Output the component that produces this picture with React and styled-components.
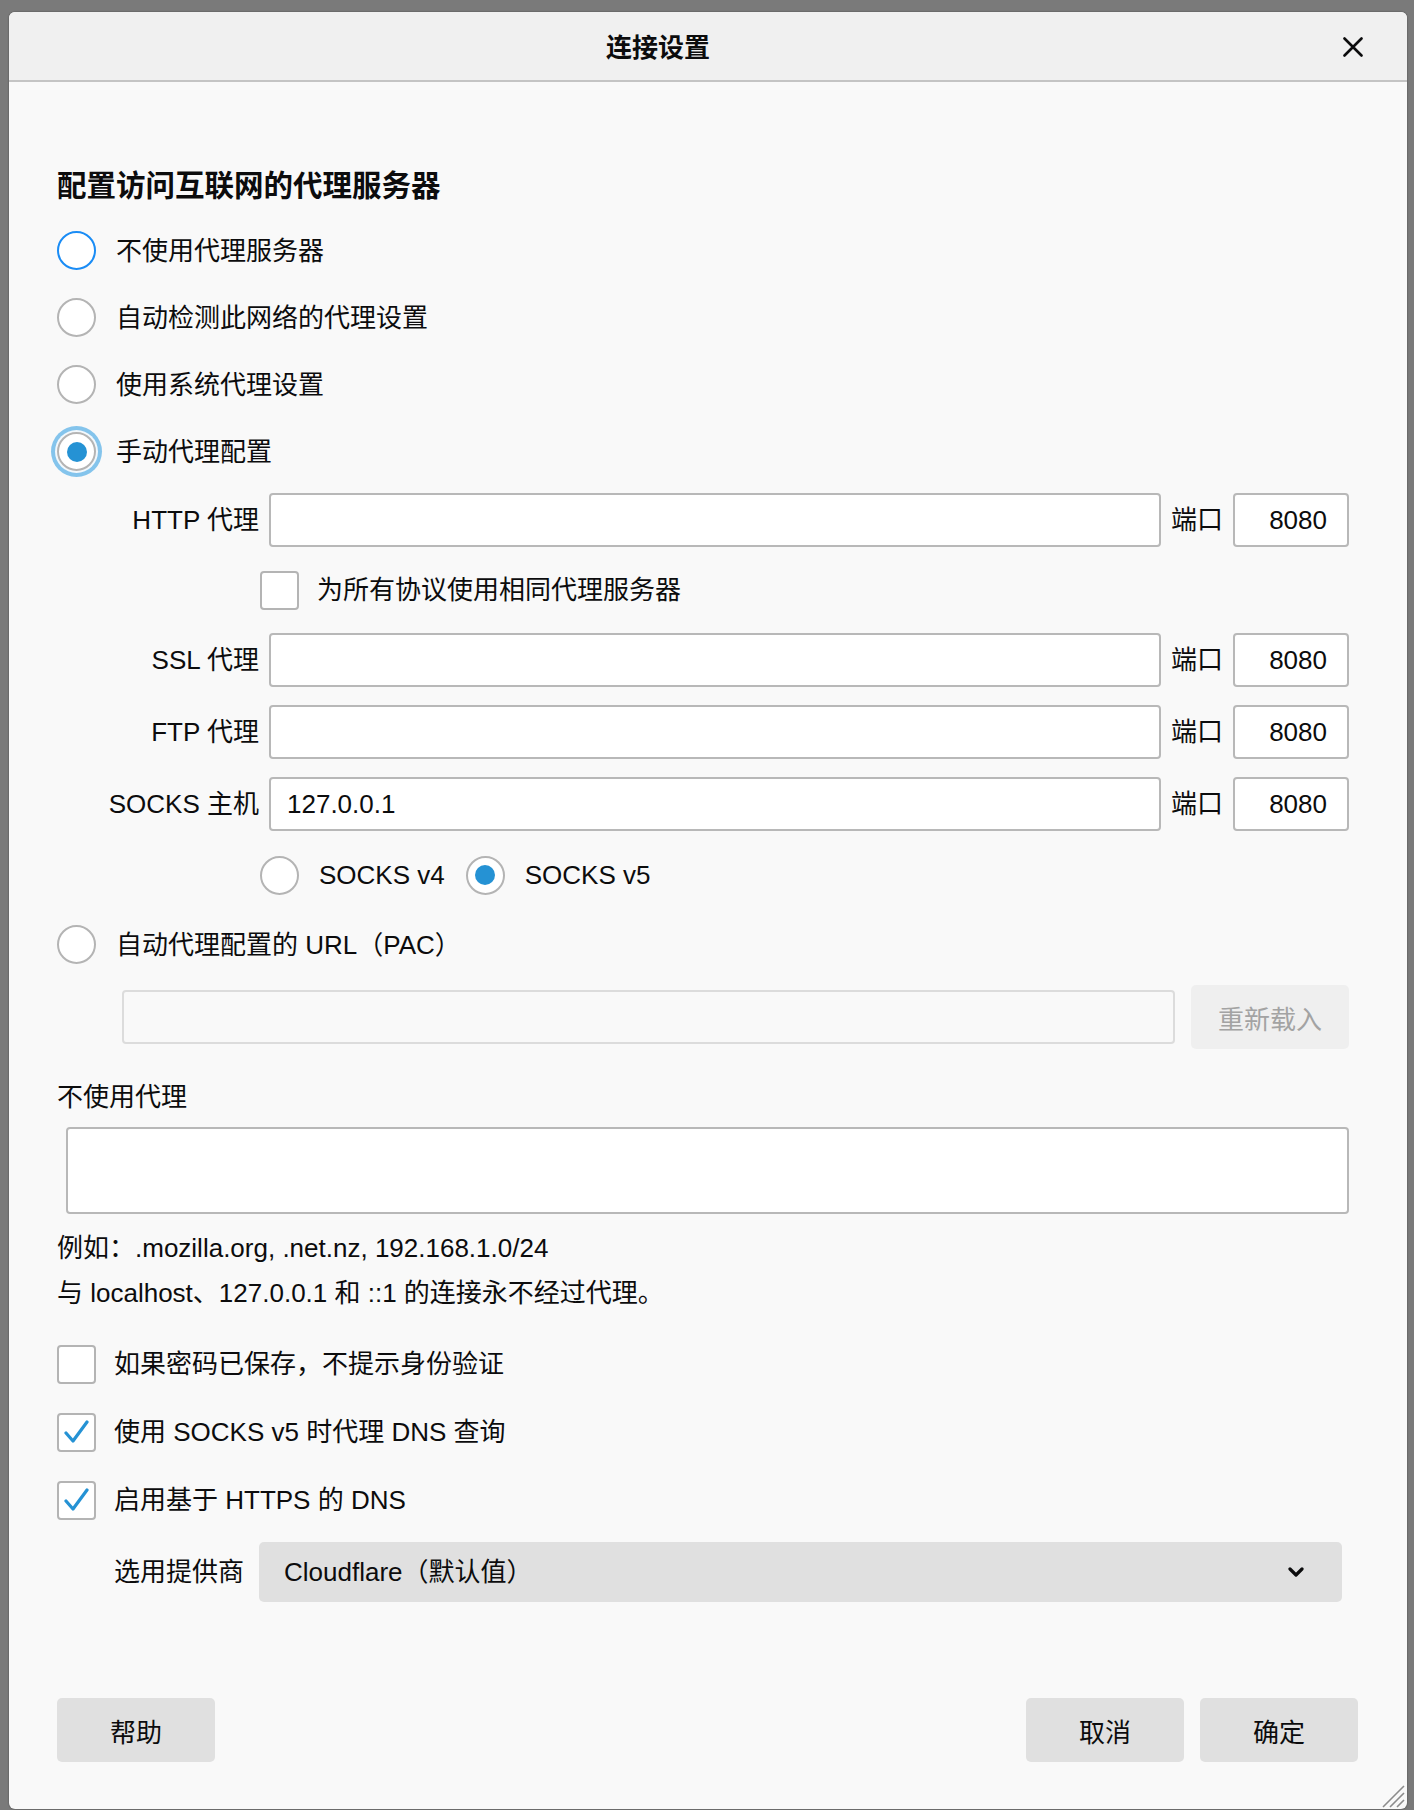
import React from "react"
import styled, { createGlobalStyle, css } from "styled-components"

const GlobalStyle = createGlobalStyle`
  html, body {
    margin: 0;
    padding: 0;
    background: #7a7a7a;
  }
  * {
    box-sizing: border-box;
  }
`

const font = `"Liberation Sans", "Noto Sans CJK SC", sans-serif`

const Backdrop = styled.div`
  height: 1810px;
  padding: 12px 7px 0 9px;
  overflow: hidden;
  font-family: ${font};
  color: #0c0c0d;
`

const Dialog = styled.div`
  position: relative;
  height: 1797px;
  background: #f9f9f9;
  border-radius: 6px;
  box-shadow: 0 0 2px rgba(0, 0, 0, 0.45);
  display: flex;
  flex-direction: column;
  overflow: hidden;
`

const TitleBar = styled.div`
  height: 70px;
  flex-shrink: 0;
  background: #f0f0f0;
  border-bottom: 2px solid #c4c4c4;
  display: flex;
  align-items: center;
  padding: 3px 100px 0 0;
  position: relative;
`

const Title = styled.div`
  flex: 1;
  text-align: center;
  font-size: 26px;
  font-weight: bold;
  line-height: 36px;
`

const CloseButton = styled.div`
  position: absolute;
  right: 44px;
  top: 25px;
  width: 20px;
  height: 20px;
  display: flex;
`

const Body = styled.div`
  flex: 1;
  display: flex;
  flex-direction: column;
  padding: 86px 58px 47px 48px;
  font-size: 26px;
`

const Heading = styled.div`
  font-size: 29.5px;
  font-weight: bold;
  line-height: 36px;
  margin-bottom: 13px;
`

const OptionRow = styled.label`
  display: flex;
  align-items: center;
  gap: ${p => p.$gap ?? 20}px;
  height: ${p => p.$height ?? 67}px;
  margin-top: ${p => p.$top ?? 0}px;
  line-height: 36px;
`

const Radio = styled.span`
  position: relative;
  flex-shrink: 0;
  width: 39px;
  height: 39px;
  border-radius: 50%;
  background: #fff;
  border: 2px solid ${p => (p.$accent ? "#1a8cf5" : "#b4b4b4")};
  ${p =>
    p.$focused &&
    css`
      box-shadow: 0 0 0 2px #f2f8fc, 0 0 0 6px #84c4ec;
    `}
  ${p =>
    p.$checked &&
    css`
      &::after {
        content: "";
        position: absolute;
        left: 50%;
        top: 50%;
        width: 20px;
        height: 20px;
        margin: -10px 0 0 -10px;
        border-radius: 50%;
        background: #2592d4;
      }
    `}
`

const Box = styled.span`
  flex-shrink: 0;
  width: 39px;
  height: 39px;
  border-radius: 4px;
  background: #fff;
  border: 2px solid #b4b4b4;
  display: flex;
  align-items: center;
  justify-content: center;
`

const ProxyGrid = styled.div`
  display: grid;
  grid-template-columns: 202px 1fr auto 116px;
  grid-template-rows: 54px 50px 54px 54px 54px 52px;
  column-gap: 10px;
  row-gap: 18px;
  align-items: center;
  margin-top: 8px;
  line-height: 36px;
`

const FieldLabel = styled.span`
  text-align: right;
  white-space: nowrap;
`

const TextField = styled.input`
  height: 54px;
  width: 100%;
  border: 2px solid #b8b8b8;
  border-radius: 4px;
  background: ${p => (p.disabled ? "#f9f9f9" : "#fff")};
  border-color: ${p => (p.disabled ? "#dcdcdc" : "#b8b8b8")};
  font: 26px ${font};
  color: #0c0c0d;
  padding: 0 ${p => (p.$align === "right" ? 20 : 16)}px 0 16px;
  text-align: ${p => p.$align || "left"};
  outline: none;
`

const SubRow = styled.div`
  grid-column: 2 / -1;
  margin-left: -9px;
  display: flex;
  align-items: center;
  gap: ${p => p.$gap ?? 18}px;
`

const RadioPair = styled.label`
  display: flex;
  align-items: center;
  gap: 20px;
`

const PacRow = styled.div`
  display: flex;
  align-items: center;
  gap: 16px;
  margin: 7px 0 0 65px;
  height: 64px;
`

const Button = styled.button`
  width: 158px;
  height: 64px;
  flex-shrink: 0;
  border: none;
  border-radius: 5px;
  background: ${p => (p.disabled ? "#efefef" : "#e0e0e0")};
  color: ${p => (p.disabled ? "#a3a3a3" : "#0c0c0d")};
  font: 26px ${font};
  padding: 0;
`

const SectionLabel = styled.div`
  line-height: 36px;
  margin-top: 30px;
`

const TextArea = styled.textarea`
  display: block;
  height: 87px;
  margin: 12px 0 0 9px;
  width: calc(100% - 9px);
  border: 2px solid #b8b8b8;
  border-radius: 4px;
  background: #fff;
  resize: none;
  font: 26px ${font};
  outline: none;
`

const Hint = styled.div`
  line-height: 36px;
  margin-top: ${p => p.$top}px;
`

const SelectRow = styled.div`
  display: flex;
  align-items: center;
  gap: 15px;
  margin: 8px 7px 0 57px;
  line-height: 36px;
`

const Select = styled.div`
  flex: 1;
  height: 60px;
  border-radius: 5px;
  background: #e0e0e0;
  display: flex;
  align-items: center;
  justify-content: space-between;
  padding: 0 38px 0 25px;
`

const Footer = styled.div`
  margin-top: auto;
  display: flex;
  align-items: center;
  gap: 16px;
  margin-right: -9px;
`

const Spacer = styled.div`
  flex: 1;
`

const Grip = styled.svg`
  position: absolute;
  right: 2px;
  bottom: 1px;
`

const Check = () => (
  <svg width="26" height="26" viewBox="0 0 26 26">
    <path d="M2 14 L9 22 L23 3" fill="none" stroke="#2592d4" strokeWidth="3.2" strokeLinecap="round" strokeLinejoin="round" />
  </svg>
)

const fields = [
  { label: "SSL 代理", value: "" },
  { label: "FTP 代理", value: "" },
  { label: "SOCKS 主机", value: "127.0.0.1" },
]

const PortCells = () => (
  <>
    <span>端口</span>
    <TextField defaultValue="8080" $align="right" />
  </>
)

const App = () => {
  return (
    <Backdrop>
      <GlobalStyle />
      <Dialog>
        <TitleBar>
          <Title>连接设置</Title>
          <CloseButton>
            <svg width="20" height="20" viewBox="0 0 20 20">
              <path d="M1.5 1.5 L18.5 18.5 M18.5 1.5 L1.5 18.5" stroke="#0c0c0d" strokeWidth="2.6" strokeLinecap="round" />
            </svg>
          </CloseButton>
        </TitleBar>
        <Body>
          <Heading>配置访问互联网的代理服务器</Heading>
          <OptionRow>
            <Radio $accent />
            不使用代理服务器
          </OptionRow>
          <OptionRow>
            <Radio />
            自动检测此网络的代理设置
          </OptionRow>
          <OptionRow>
            <Radio />
            使用系统代理设置
          </OptionRow>
          <OptionRow>
            <Radio $checked $focused />
            手动代理配置
          </OptionRow>

          <ProxyGrid>
            <FieldLabel>HTTP 代理</FieldLabel>
            <TextField />
            <PortCells />
            <SubRow>
              <Box />
              为所有协议使用相同代理服务器
            </SubRow>
            {fields.map(f => (
              <React.Fragment key={f.label}>
                <FieldLabel>{f.label}</FieldLabel>
                <TextField defaultValue={f.value} />
                <PortCells />
              </React.Fragment>
            ))}
            <SubRow $gap={21}>
              <RadioPair>
                <Radio />
                SOCKS v4
              </RadioPair>
              <RadioPair>
                <Radio $checked />
                SOCKS v5
              </RadioPair>
            </SubRow>
          </ProxyGrid>

          <OptionRow $top={10}>
            <Radio />
            自动代理配置的 URL（PAC）
          </OptionRow>
          <PacRow>
            <TextField disabled />
            <Button disabled>重新载入</Button>
          </PacRow>

          <SectionLabel>不使用代理</SectionLabel>
          <TextArea />
          <Hint $top={16}>例如：.mozilla.org, .net.nz, 192.168.1.0/24</Hint>
          <Hint $top={9}>与 localhost、127.0.0.1 和 ::1 的连接永不经过代理。</Hint>

          <OptionRow $height={68} $top={19} $gap={18}>
            <Box />
            如果密码已保存，不提示身份验证
          </OptionRow>
          <OptionRow $height={68} $gap={18}>
            <Box>
              <Check />
            </Box>
            使用 SOCKS v5 时代理 DNS 查询
          </OptionRow>
          <OptionRow $height={68} $gap={18}>
            <Box>
              <Check />
            </Box>
            启用基于 HTTPS 的 DNS
          </OptionRow>
          <SelectRow>
            <span>选用提供商</span>
            <Select>
              <span>Cloudflare（默认值）</span>
              <svg width="16" height="11" viewBox="0 0 16 11">
                <path d="M2 2 L8 8 L14 2" fill="none" stroke="#0c0c0d" strokeWidth="3.2" strokeLinecap="round" strokeLinejoin="round" />
              </svg>
            </Select>
          </SelectRow>

          <Footer>
            <Button>帮助</Button>
            <Spacer />
            <Button>取消</Button>
            <Button>确定</Button>
          </Footer>
        </Body>
        <Grip width="26" height="26" viewBox="0 0 26 26">
          <path d="M25 4 L4 25 M25 11 L11 25 M25 18 L18 25" stroke="#8c8c8c" strokeWidth="1.6" />
        </Grip>
      </Dialog>
    </Backdrop>
  )
}

export default App
